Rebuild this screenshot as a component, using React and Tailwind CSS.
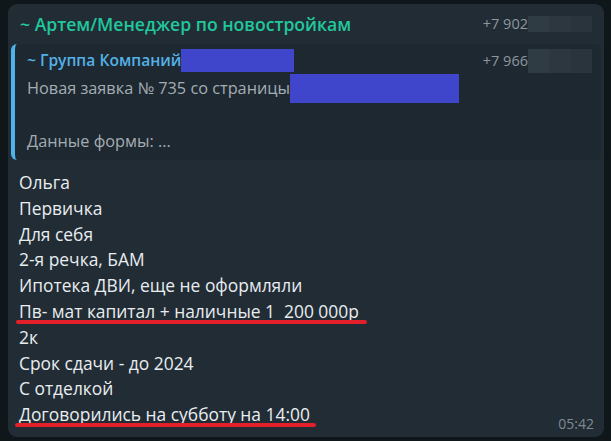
import React from "react";

const font = { fontFamily: '"Open Sans", "Noto Sans", sans-serif' };

function Blur({ className }) {
  return (
    <span className={"inline-flex " + className}>
      <span className="h-full w-1/3 bg-[#303c44]" />
      <span className="h-full w-1/3 bg-[#2c373f]" />
      <span className="h-full w-1/3 bg-[#2a343c]" />
    </span>
  );
}

function Marked({ children, left, width }) {
  return (
    <div className="relative">
      <span className="underline decoration-1 underline-offset-[3px]">{children}</span>
      <span
        className="absolute top-[21px] h-[4px] rounded-full bg-[#e3202a]"
        style={{ left, width }}
      />
    </div>
  );
}

export default function App() {
  const lines1 = ["Ольга", "Первичка", "Для себя", "2-я речка, БАМ", "Ипотека ДВИ, еще не оформляли"];
  return (
    <div className="w-[611px] h-[441px] bg-[#0f171b] pt-[4px] pl-[8px] pr-[7px] pb-[4px] overflow-hidden" style={font}>
      <div className="relative h-full rounded-[9px] bg-[#212c35]">
        <div className="flex items-center justify-between pl-[12px] pr-[12px] pt-[3px] h-[37px]">
          <span className="text-[17.6px] font-semibold text-[#22c79c] leading-[22px]">~ Артем/Менеджер по новостройкам</span>
          <span className="flex items-center text-[14.5px] text-[#8d979f]">
            +7 902
            <Blur className="h-[16px] w-[64px]" />
          </span>
        </div>
        <div className="mx-[3px] mt-[3px] h-[116px] rounded-[6px] bg-[#1e2830] border-l-[4px] border-[#4db3ea] pl-[12px] pr-[9px] pt-[5px]">
          <div className="flex items-center justify-between h-[24px]">
            <span className="flex items-center text-[15.6px] font-semibold text-[#54b1e6]">
              ~ Группа Компаний
              <span className="inline-block w-[113px] h-[23px] bg-[#3f46cc]" />
            </span>
            <span className="flex items-center text-[14.5px] text-[#8d979f]">
              +7 966
              <Blur className="h-[24px] w-[64px]" />
            </span>
          </div>
          <div className="flex items-center h-[30px] text-[16.3px] text-[#a4adb4]">
            Новая заявка № 735 со страницы
            <span className="inline-block w-[169px] h-[29px] bg-[#3f46cc]" />
          </div>
          <div className="h-[25px]" />
          <div className="text-[16.3px] text-[#a4adb4] leading-[27px]">Данные формы: ...</div>
        </div>
        <div className="pl-[11px] pt-[10px] text-[17.4px] leading-[25.8px] text-[#e9edf0]">
          {lines1.map((l) => (
            <div key={l}>{l}</div>
          ))}
          <Marked left="-3px" width="351px">Пв- мат капитал + наличные 1&nbsp; 200 000р</Marked>
          <div>2к</div>
          <div>Срок сдачи - до 2024</div>
          <div>С отделкой</div>
          <Marked left="-4px" width="301px">Договорились на субботу на 14:00</Marked>
        </div>
        <span className="absolute right-[10px] bottom-[3px] text-[14px] text-[#7e8a93]">05:42</span>
      </div>
    </div>
  );
}
